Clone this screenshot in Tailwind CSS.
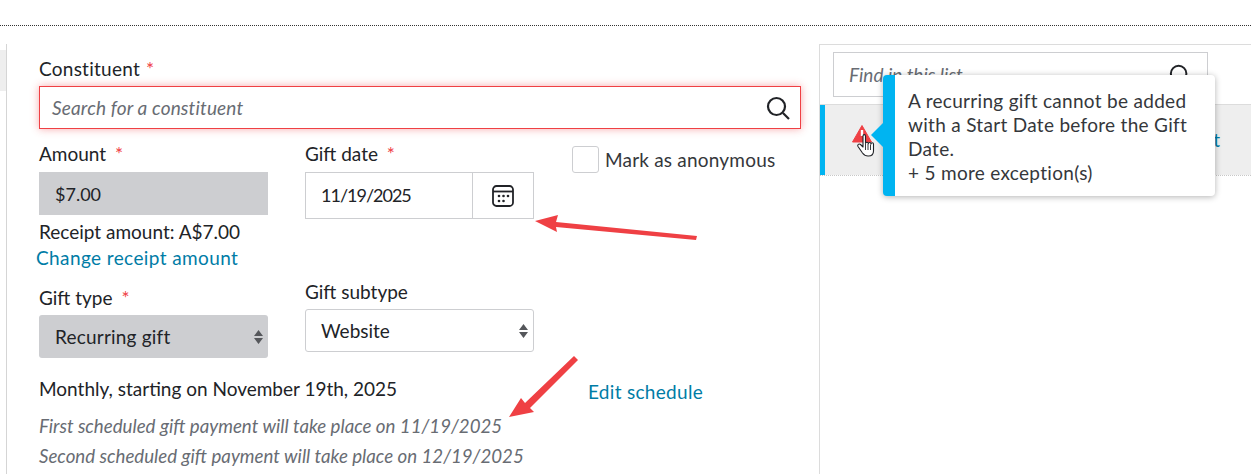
<!DOCTYPE html>
<html lang="en">
<head>
  <meta charset="UTF-8" />
  <title>Add gift</title>
  <script src="https://cdn.jsdelivr.net/npm/@tailwindcss/browser@4"></script>
</head>
<body class="bg-white text-[#212327] font-['Lato',sans-serif] text-[19px] leading-[24px] overflow-hidden">
  <div class="relative w-[1251px] h-[474px] overflow-hidden">
    <!-- Top rule -->
    <div class="h-[26px] border-b border-dotted border-[#333]"></div>

    <div class="flex mt-[18px] h-[430px]">
      <!-- Left rail -->
      <div class="w-[7px] border-r border-[#d5d5d5] pt-[6px]">
        <div class="h-[41px] bg-[#eeeeee]"></div>
      </div>

      <!-- Form -->
      <div class="w-[812px] pl-[32px] pr-[18px] pt-[13px]">
        <div class="h-[24px] tracking-[0.25px]">Constituent <span class="text-[#ef4044] ml-[1px]">*</span></div>
        <div class="mt-[5px] w-[762px] h-[43px] flex items-center justify-between border border-[#ef4044] shadow-[0_0_8px_rgba(239,64,68,0.45)] pl-[12px] pr-[10px]">
          <span class="italic text-[#686c73] tracking-[0.15px]">Search for a constituent</span>
          <svg class="w-[24px] h-[24px]" viewBox="0 0 24 24" fill="none" stroke="#212327" stroke-width="2.2"><circle cx="10.5" cy="10.5" r="8.5"/><path d="M17 17l6 6"/></svg>
        </div>

        <div class="flex mt-[13px]">
          <div class="w-[229px]">
            <div class="h-[24px]">Amount <span class="text-[#ef4044] ml-[4px]">*</span></div>
            <div class="mt-[6px] h-[43px] bg-[#cdced1] pl-[16px] flex items-center text-[18px]">$7.00</div>
            <div class="mt-[5px] h-[24px]">Receipt amount: A$7.00</div>
            <a class="block -ml-[3px] mt-[2px] h-[24px] text-[#007ca6] tracking-[0.4px]">Change receipt amount</a>
          </div>
          <div class="w-[229px] ml-[37px]">
            <div class="h-[24px]">Gift date <span class="text-[#ef4044] ml-[4px]">*</span></div>
            <div class="mt-[6px] h-[47px] flex border border-[#cdced1]">
              <div class="flex-1 pl-[15px] pb-[2px] flex items-center text-[18px] tracking-[-1px]">11/19/2025</div>
              <div class="w-[61px] border-l border-[#cdced1] flex items-center justify-center">
                <svg class="w-[24px] h-[24px]" viewBox="0 0 24 24" fill="none" stroke="#212327" stroke-width="1.8"><rect x="2" y="2" width="20" height="20" rx="3.5"/><path d="M2 7.5h20"/><g fill="#212327" stroke="none"><circle cx="8" cy="12" r="1.3"/><circle cx="12.5" cy="12" r="1.3"/><circle cx="17" cy="12" r="1.3"/><circle cx="8" cy="17" r="1.3"/><circle cx="12.5" cy="17" r="1.3"/></g></svg>
              </div>
            </div>
          </div>
          <label class="ml-[38px] mt-[4px] h-[27px] flex items-center gap-[6px] text-[#35373b] tracking-[0.2px]">
            <span class="w-[27px] h-[27px] border border-[#cdced1] rounded-[3px]"></span>
            Mark as anonymous
          </label>
        </div>

        <div class="flex mt-[10px]">
          <div class="w-[229px] pt-[6px]">
            <div class="h-[24px]">Gift type <span class="text-[#ef4044] ml-[4px]">*</span></div>
            <div class="mt-[5px] h-[43px] bg-[#cdced1] rounded-[3px] pl-[16px] pr-[5px] flex items-center justify-between tracking-[0.2px]">
              Recurring gift
              <svg class="w-[9px] h-[14px]" viewBox="0 0 9 14" fill="#55575b"><path d="M4.5 0L9 6H0zM0 8h9l-4.500 6z"/></svg>
            </div>
          </div>
          <div class="w-[229px] ml-[37px]">
            <div class="h-[24px]">Gift subtype</div>
            <div class="mt-[5px] h-[43px] border border-[#cdced1] rounded-[3px] pl-[15px] pr-[5px] flex items-center justify-between">
              Website
              <svg class="w-[9px] h-[14px]" viewBox="0 0 9 14" fill="#55575b"><path d="M4.500 0L9 6H0zM0 8h9l-4.500 6z"/></svg>
            </div>
          </div>
        </div>

        <div class="flex mt-[19px] h-[24px]">
          <div class="w-[549px]">Monthly, starting on November 19th, 2025</div>
          <a class="text-[#007ca6] mt-[3px] tracking-[0.3px]">Edit schedule</a>
        </div>
        <div class="mt-[10px] italic text-[#686c73] leading-[30px] text-[18.7px]">
          <p>First scheduled gift payment will take place on 11/19/2025</p>
          <p>Second scheduled gift payment will take place on 12/19/2025</p>
        </div>
      </div>

      <!-- Right list -->
      <div class="flex-1 border-l border-t border-[#dcdcdc]">
        <div class="h-[59px] pt-[7px] pl-[13px]">
          <div class="w-[375px] h-[45px] border border-[#cdced1] pl-[15px] pr-[16px] flex items-center justify-between">
            <span class="italic text-[#686c73]">Find in this list</span>
            <svg class="w-[22px] h-[22px]" viewBox="0 0 24 24" fill="none" stroke="#212327" stroke-width="2.2"><circle cx="10.500" cy="10.500" r="8.500"/><path d="M17 17l6 6"/></svg>
          </div>
        </div>
        <div class="h-[71px] bg-[#eeeeee] border-t border-[#dcdcdc] flex">
          <div class="w-[5px] bg-[#00b4f1]"></div>
          <div class="flex-1 flex items-center justify-end pr-[31px] text-[#007ca6]">t</div>
        </div>
        <div class="border-t border-dotted border-[#c8c8c8]"></div>
      </div>
    </div>

    <!-- Warning icon and hand pointer -->
    <svg class="absolute left-[850px] top-[122px] w-[28px] h-[36px]" viewBox="0 0 28 36">
      <path d="M12 3.500L21.500 20H2.500z" fill="#ef4044" stroke="#ef4044" stroke-linejoin="round"/>
      <path d="M10.800 8h2.400v6h-2.400z" fill="#fff"/>
      <path d="M13 14v11l-2.500-2.500c-1.500-1.200-3.500.3-2.500 2l4.500 6.500c1.500 2 3 3 5.500 3h.5c3 0 5-2 5-5v-7c0-1.600-2.400-1.600-2.500 0 0-2-2.500-2-2.700-.2 0-2-2.500-2-2.800-.3v-7.500c0-1.800-2.500-1.800-2.500 0z" fill="#fff" stroke="#212327" stroke-width="1.100" stroke-linejoin="round"/>
      <path d="M15.500 22v6M18 22v6M20.500 22.500v5.500" stroke="#212327" stroke-width="0.900" fill="none"/>
    </svg>

    <!-- Tooltip -->
    <div class="absolute left-[883px] top-[75px] w-[332px] h-[121px] bg-white rounded-[4px] shadow-[0_1px_6px_rgba(0,0,0,0.3)] border-l-[12px] border-[#00b4f1] pl-[13px] pt-[14px] pr-[12px] text-[#35373b] tracking-[0.3px]">
      A recurring gift cannot be added<br />with a Start Date before the Gift<br />Date.<br />+ 5 more exception(s)
    </div>
    <div class="absolute left-[871px] top-[123px] w-0 h-0 border-y-[12px] border-y-transparent border-r-[12px] border-r-[#00b4f1]"></div>

    <!-- Annotation arrows -->
    <svg class="absolute left-0 top-0 w-[1251px] h-[474px] pointer-events-none" viewBox="0 0 1251 474" fill="#ef4044">
      <path d="M535 221L558 215L556 222L697 236L696 240L556 227L557 232z"/>
      <path d="M509 417L521 398L525 403L574 356L578 360L530 408L534 412z"/>
    </svg>
  </div>
</body>
</html>
